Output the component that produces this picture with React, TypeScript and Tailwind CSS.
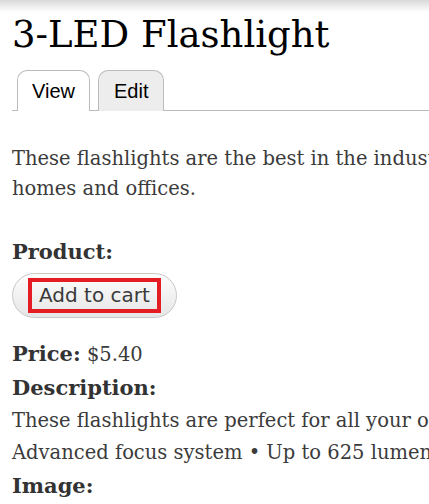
import React from 'react';

const serif = "font-['DejaVu_Serif','Liberation_Serif',serif]";

const Field = ({ label, children }: { label: string; children?: React.ReactNode }) => (
  <div className="leading-[33px]">
    <span className="text-[21px] font-bold text-[#333]">{label}</span>
    {children}
  </div>
);

export default function App() {
  return (
    <div className={`min-h-[504px] w-[429px] overflow-hidden bg-white ${serif}`}>
      {/* top shadow */}
      <div className="h-[12px] bg-gradient-to-b from-[#d9d9d9] to-white" />

      <div className="pl-3">
        <h1 className="mt-[4px] whitespace-nowrap text-[37px] font-normal leading-[37px] text-black">
          3-LED Flashlight
        </h1>

        {/* Tabs */}
        <ul className="mt-[17px] flex h-[41px] gap-[8px] border-b border-[#bbb] pl-[5px] font-['Liberation_Sans',Arial,sans-serif] text-[20px] leading-[20px] text-black">
          <li className="box-border h-[41px] rounded-t-[10px] border border-b-0 border-[#bbb] bg-white px-[14px] pt-[10px]">
            View
          </li>
          <li className="box-border h-[41px] rounded-t-[10px] border border-b-0 border-[#bbb] bg-[#ededed] px-[15px] pt-[10px]">
            Edit
          </li>
        </ul>

        <p className="mt-[33px] whitespace-nowrap text-[19.5px] leading-[30px] text-[#3b3b3b]">
          These flashlights are the best in the industry for
          <br />
          homes and offices.
        </p>

        <div className="mt-[31px] text-[19.5px] text-[#3b3b3b]">
          <Field label="Product:" />
          <button className="mt-[4px] flex h-[45px] items-center rounded-full border border-[#c8c8c8] bg-gradient-to-b from-[#fdfdfd] to-[#e6e6e6] px-[15px]">
            <span className="border-4 border-[#e41c24] pl-[7px] pr-[7px] font-['DejaVu_Sans',Verdana,sans-serif] text-[20px] leading-[27px] text-[#3a3a3a]">
              Add to cart
            </span>
          </button>

          <div className="mt-[19px] whitespace-nowrap">
            <Field label="Price:">
              <span> $5.40</span>
            </Field>
            <Field label="Description:" />
            <div className="leading-[32px]">These flashlights are perfect for all your outdoor needs.</div>
            <div className="leading-[32px]">Advanced focus system • Up to 625 lumens • Waterproof</div>
            <Field label="Image:" />
          </div>
        </div>
      </div>
    </div>
  );
}
